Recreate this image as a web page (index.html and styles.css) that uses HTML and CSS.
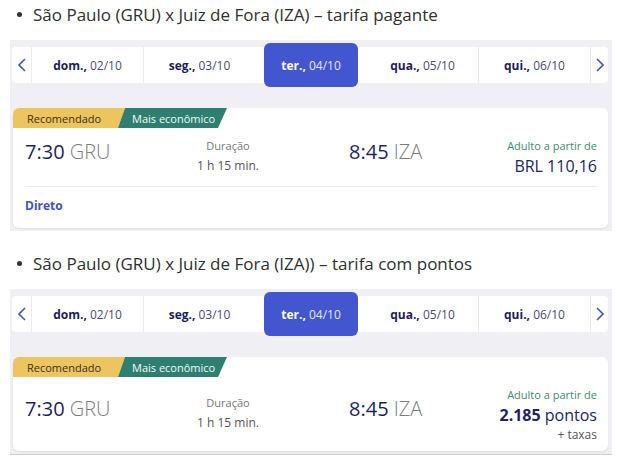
FILE: index.html
```html
<!DOCTYPE html>
<html lang="pt-BR">
<head>
    <meta charset="UTF-8">
    <meta name="viewport" content="width=device-width, initial-scale=1.0">
    <title>Tarifas GRU x IZA</title>
    <link rel="stylesheet" href="styles.css">
</head>
<body>
    <ul class="routes">
        <li class="route">
            <div class="route-title"><span class="dot"></span>São Paulo (GRU) x Juiz de Fora (IZA) – tarifa pagante</div>
            <div class="shot">
                <div class="dates">
                    <div class="arrow left"><svg width="8" height="14" viewBox="0 0 8 14"><polyline points="7,1 1,7 7,13" /></svg></div>
                    <div class="day sep"><b>dom.,</b>&nbsp;02/10</div>
                    <div class="day"><b>seg.,</b>&nbsp;03/10</div>
                    <div class="day active"><b>ter.,</b>&nbsp;04/10</div>
                    <div class="day sep"><b>qua.,</b>&nbsp;05/10</div>
                    <div class="day"><b>qui.,</b>&nbsp;06/10</div>
                    <div class="arrow right"><svg width="8" height="14" viewBox="0 0 8 14"><polyline points="1,1 7,7 1,13" /></svg></div>
                </div>
                <div class="card">
                    <div class="tags">
                        <span class="tag yellow">Recomendado</span>
                        <span class="tag teal">Mais econômico</span>
                    </div>
                    <div class="flight">
                        <div class="time"><strong>7:30</strong> GRU</div>
                        <div class="duration">
                            <span class="small">Duração</span>
                            <span class="len">1 h 15 min.</span>
                        </div>
                        <div class="time arrival"><strong>8:45</strong> IZA</div>
                        <div class="price">
                            <span class="from">Adulto a partir de</span>
                            <span class="amount">BRL 110,16</span>
                        </div>
                    </div>
                    <div class="card-foot">Direto</div>
                </div>
            </div>
        </li>
        <li class="route">
            <div class="route-title"><span class="dot"></span>São Paulo (GRU) x Juiz de Fora (IZA)) – tarifa com pontos</div>
            <div class="shot cut">
                <div class="dates">
                    <div class="arrow left"><svg width="8" height="14" viewBox="0 0 8 14"><polyline points="7,1 1,7 7,13" /></svg></div>
                    <div class="day sep"><b>dom.,</b>&nbsp;02/10</div>
                    <div class="day"><b>seg.,</b>&nbsp;03/10</div>
                    <div class="day active"><b>ter.,</b>&nbsp;04/10</div>
                    <div class="day sep"><b>qua.,</b>&nbsp;05/10</div>
                    <div class="day"><b>qui.,</b>&nbsp;06/10</div>
                    <div class="arrow right"><svg width="8" height="14" viewBox="0 0 8 14"><polyline points="1,1 7,7 1,13" /></svg></div>
                </div>
                <div class="card">
                    <div class="tags">
                        <span class="tag yellow">Recomendado</span>
                        <span class="tag teal">Mais econômico</span>
                    </div>
                    <div class="flight">
                        <div class="time"><strong>7:30</strong> GRU</div>
                        <div class="duration">
                            <span class="small">Duração</span>
                            <span class="len">1 h 15 min.</span>
                        </div>
                        <div class="time arrival"><strong>8:45</strong> IZA</div>
                        <div class="price">
                            <span class="from">Adulto a partir de</span>
                            <span class="amount"><b>2.185</b> pontos</span>
                            <span class="tax">+ taxas</span>
                        </div>
                    </div>
                </div>
            </div>
        </li>
    </ul>
</body>
</html>
```

FILE: styles.css
```css
/* Page */
body {
    margin: 0;
    padding: 4px 0 0;
    background: #fff;
    font-family: "Open Sans", "Noto Sans", sans-serif;
    color: #333;
}

.routes {
    list-style: none;
    margin: 0;
    padding: 0;
}

.route + .route {
    margin-top: 22px;
}

.route-title {
    display: flex;
    align-items: center;
    height: 20px;
    padding-left: 17px;
    font-size: 17px;
    font-weight: 500;
    color: #2f2f2f;
}

.dot {
    width: 5px;
    height: 5px;
    border-radius: 50%;
    background: #333;
    margin-right: 11px;
}

/* Screenshot panel */
.shot {
    margin: 16px 5px 0 10px;
    padding: 7px 4px 3px 2px;
    background: #f0f0f4;
}

.shot.cut {
    height: 155px;
    overflow: hidden;
    border-bottom: 1px solid #cfcfd2;
}

/* Date strip */
.dates {
    display: flex;
    height: 36px;
    background: #fff;
    border-radius: 4px;
}

.arrow {
    width: 19px;
    display: flex;
    align-items: center;
    justify-content: center;
}

.arrow svg {
    fill: none;
    stroke: #4a55b8;
    stroke-width: 1.6;
}

.arrow.left {
    border-right: 1px solid #ececf0;
}

.arrow.right {
    width: 17px;
    border-left: 1px solid #ececf0;
}

.day {
    flex: 1;
    display: flex;
    align-items: center;
    justify-content: center;
    font-size: 12px;
    color: #4b4a72;
}

.day b {
    color: #1e1c5a;
    font-weight: 700;
}

.day.sep {
    border-right: 1px solid #ececf0;
}

.day.active {
    flex: 0 0 94px;
    margin: -4px 9px;
    background: #4256cf;
    border-radius: 6px;
    color: #e4e7ff;
}

.day.active b {
    color: #fff;
}

/* Flight card */
.card {
    margin: 25px 0 0 1px;
    background: #fff;
    border-radius: 6px;
    overflow: hidden;
    box-shadow: 0 1px 2px rgba(0, 0, 0, 0.08);
}

.tags {
    display: flex;
    height: 20px;
}

.tag {
    display: flex;
    align-items: center;
    font-size: 11px;
}

.tag.yellow {
    width: 112px;
    padding-left: 14px;
    box-sizing: border-box;
    background: #edc55e;
    color: #3a3020;
    clip-path: polygon(0 0, 100% 0, calc(100% - 7px) 100%, 0 100%);
}

.tag.teal {
    width: 109px;
    margin-left: -7px;
    padding-left: 14px;
    box-sizing: border-box;
    background: #2e7f70;
    color: #f2fbf8;
    clip-path: polygon(7px 0, 100% 0, calc(100% - 9px) 100%, 0 100%);
}

.flight {
    display: grid;
    grid-template-columns: 148px 110px 1fr auto;
    align-items: center;
    padding: 10px 11px 8px 12px;
}

.time {
    font-size: 20px;
    line-height: 26px;
    margin-bottom: 12px;
    color: #7a7a80;
    font-weight: 300;
}

.time strong {
    color: #221f62;
    font-weight: 400;
}

.arrival {
    padding-left: 66px;
}

.duration {
    display: flex;
    flex-direction: column;
    align-items: center;
    color: #555;
}

.small {
    font-size: 11px;
    line-height: 16px;
    color: #777;
}

.len {
    font-size: 12px;
    line-height: 24px;
}

.price {
    display: flex;
    flex-direction: column;
    align-items: flex-end;
}

.from {
    font-size: 11px;
    line-height: 16px;
    color: #3d8c72;
}

.amount {
    font-size: 16px;
    line-height: 24px;
    color: #221f62;
}

.amount b {
    font-weight: 700;
}

.tax {
    font-size: 12px;
    line-height: 16px;
    color: #555;
}

.card-foot {
    margin: 0 11px 0 12px;
    padding: 11px 0 14px;
    border-top: 1px solid #ebebee;
    font-size: 12px;
    line-height: 16px;
    font-weight: 700;
    color: #4252c4;
}
```
